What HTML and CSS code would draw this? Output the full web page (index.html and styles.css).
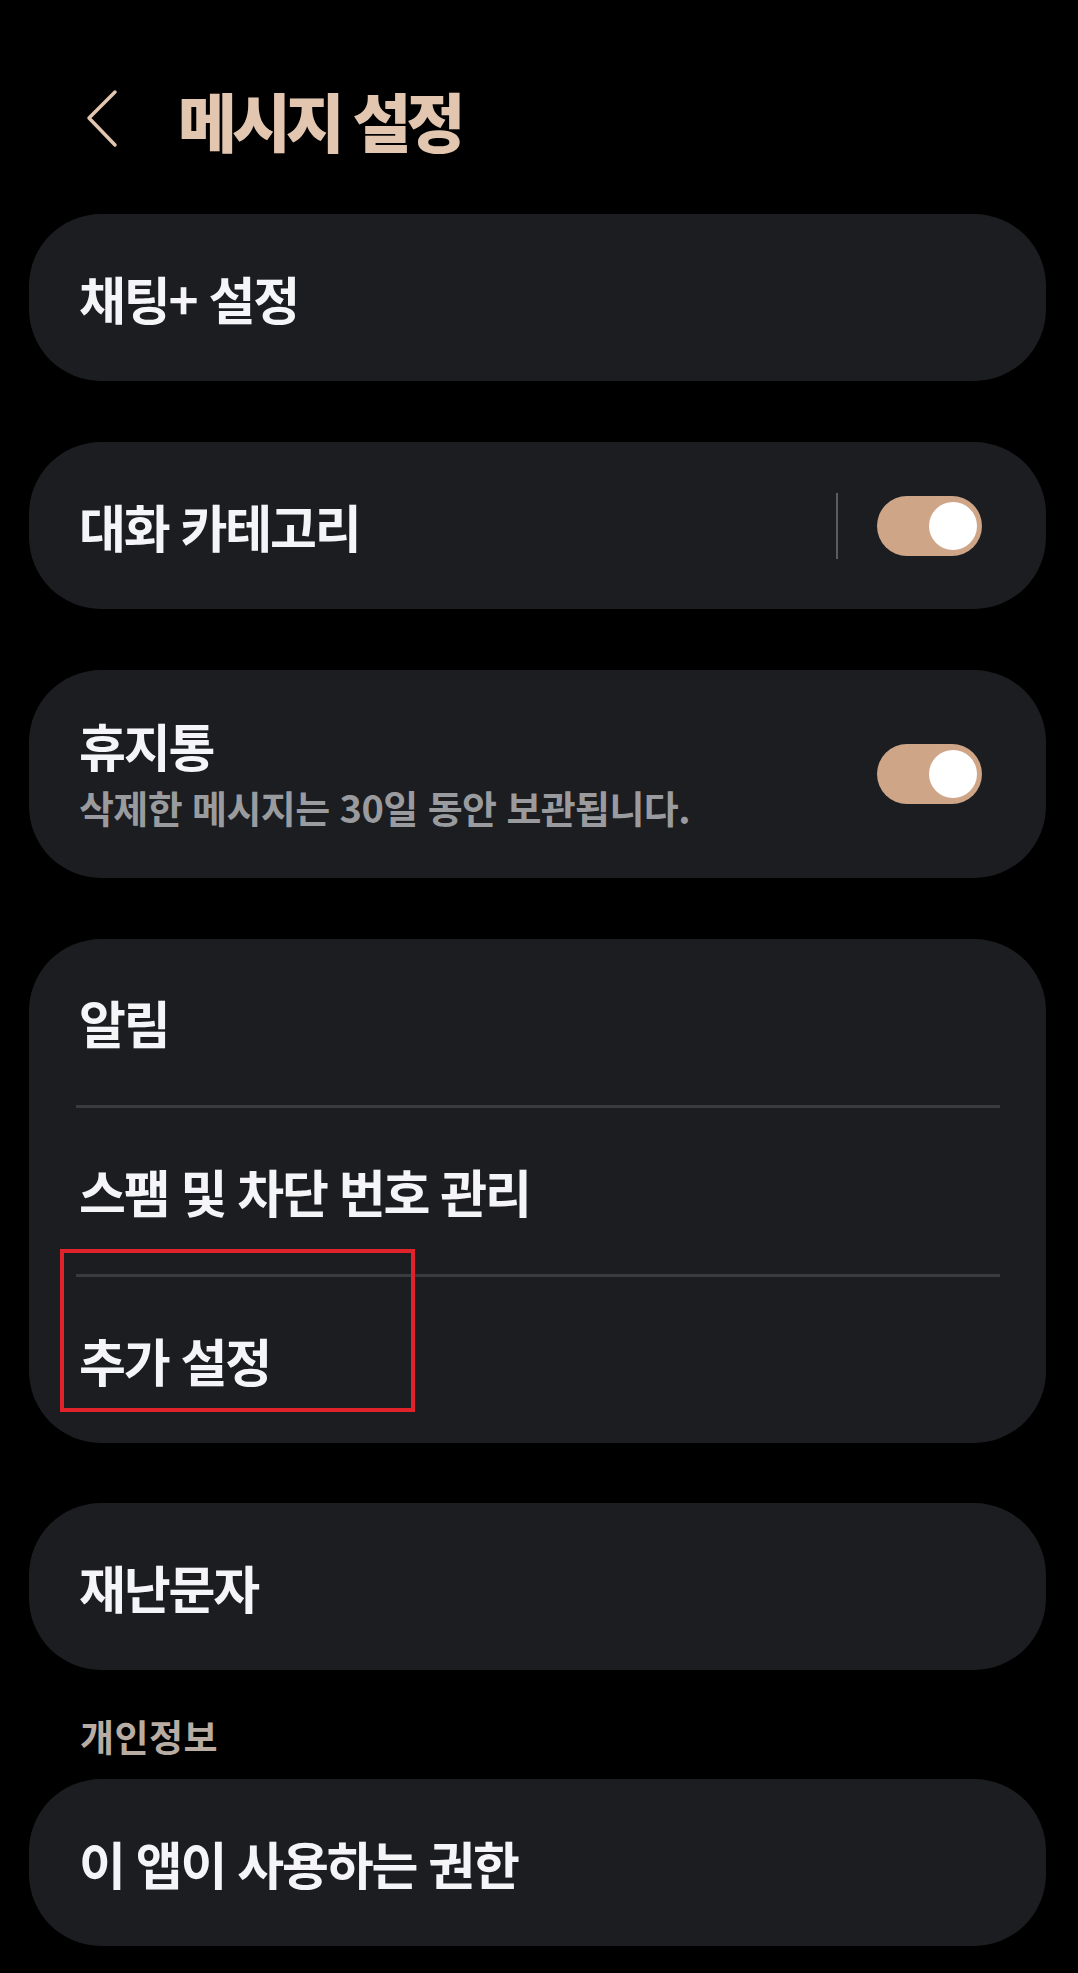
FILE: index.html
```html
<!DOCTYPE html>
<html lang="ko">
<head>
  <meta charset="UTF-8">
  <title>메시지 설정</title>
  <link rel="stylesheet" href="styles.css">
</head>
<body>

<!-- Header -->
<div class="header">
  <svg class="back" width="32" height="60" viewBox="0 0 32 60">
    <polyline points="29,3 3,29 29,56" fill="none" stroke="#e2c6b0" stroke-width="3.5" stroke-linecap="round" stroke-linejoin="round"/>
  </svg>
  <h1>메시지 설정</h1>
</div>

<div class="card">
  <div class="row"><span class="label">채팅+ 설정</span></div>
</div>

<div class="card">
  <div class="row">
    <span class="label">대화 카테고리</span>
    <span class="vline"></span>
    <span class="switch on"></span>
  </div>
</div>

<div class="card">
  <div class="row tall">
    <div class="text">
      <div class="label">휴지통</div>
      <div class="sub">삭제한 메시지는 30일 동안 보관됩니다.</div>
    </div>
    <span class="switch on push"></span>
  </div>
</div>

<!-- Group with dividers -->
<div class="card group">
  <div class="row"><span class="label">알림</span></div>
  <div class="divider"></div>
  <div class="row"><span class="label">스팸 및 차단 번호 관리</span></div>
  <div class="divider"></div>
  <div class="row"><span class="label">추가 설정</span></div>
  <div class="highlight"></div>
</div>

<div class="card last">
  <div class="row"><span class="label">재난문자</span></div>
</div>

<div class="section-title">개인정보</div>

<div class="card">
  <div class="row"><span class="label">이 앱이 사용하는 권한</span></div>
</div>

</body>
</html>
```

FILE: styles.css
```css
body {
  margin: 0;
  background: #000;
  font-family: "Noto Sans CJK KR", "Noto Sans", sans-serif;
  color: #f5f5f7;
}
.header {
  height: 214px;
  padding-top: 24px;
  box-sizing: border-box;
  display: flex;
  align-items: center;
}
.back {
  margin-left: 86px;
}
h1 {
  margin: 0 0 0 60px;
  font-size: 64px;
  font-weight: 900;
  letter-spacing: -5px;
  color: #e2c6b0;
}
.card {
  background: #1b1d20;
  border-radius: 72px;
  margin: 0 32px 61px 29px;
}
.card.last {
  margin-bottom: 0;
}
.row {
  display: flex;
  align-items: center;
  height: 167px;
  padding: 0 64px 0 50px;
  box-sizing: border-box;
}
.row.tall {
  height: 208px;
}
.label {
  font-size: 51px;
  font-weight: 700;
  letter-spacing: -2.2px;
  line-height: 56px;
}
.sub {
  margin-top: 9px;
  font-size: 38px;
  font-weight: 700;
  letter-spacing: -0.6px;
  line-height: 50px;
  color: #9a9b9e;
}
.vline {
  margin-left: auto;
  width: 2px;
  height: 66px;
  background: #5b5c5f;
  margin-right: 39px;
}
.switch {
  position: relative;
  width: 105px;
  height: 60px;
  border-radius: 30px;
  background: #cfa587;
  flex-shrink: 0;
}
.switch.push {
  margin-left: auto;
}
.switch.on::after {
  content: "";
  position: absolute;
  right: 5px;
  top: 6px;
  width: 48px;
  height: 48px;
  border-radius: 50%;
  background: #fff;
}
.group {
  position: relative;
  margin-bottom: 60px;
}
.group .row {
  height: 166px;
}
.divider {
  height: 3px;
  margin: 0 46px 0 47px;
  background: #393b3e;
}
/* red annotation box */
.highlight {
  position: absolute;
  left: 31px;
  top: 310px;
  width: 347px;
  height: 155px;
  border: 4px solid #e0222b;
}
.section-title {
  padding: 41px 0 18px 80px;
  font-size: 37px;
  font-weight: 700;
  letter-spacing: 0.5px;
  line-height: 50px;
  color: #b8aca3;
}
```
